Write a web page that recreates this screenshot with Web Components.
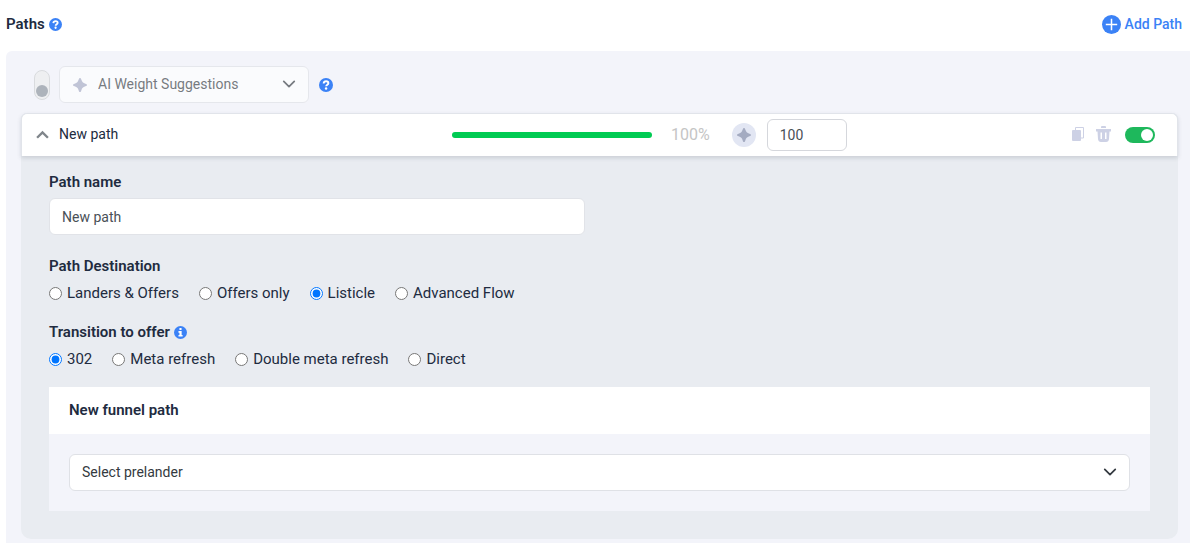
<!DOCTYPE html>
<html lang="en">
<head>
<meta charset="utf-8">
<meta name="viewport" content="width=device-width, initial-scale=1">
<title>Paths</title>
<style>
html, body {
    margin: 0;
    padding: 0;
}
body {
    background: #fff;
    color: #212b40;
    font-family: Roboto, "Liberation Sans", sans-serif;
    font-size: 15px;
    line-height: 22px;
}
</style>
</head>
<body>
<paths-editor></paths-editor>

<script>
const ICONS = {
  help: `<svg viewBox="0 0 16 16"><circle cx="8" cy="8" r="8" fill="currentColor"/><path d="M5.300 6.300C5.500 4.500 6.600 3.800 8.100 3.800c1.600 0 2.600.8 2.600 2.100 0 1.800-2.500 1.700-2.500 3.600" fill="none" stroke="#fff" stroke-width="2.200"/><circle cx="8.100" cy="12" r="1.400" fill="#fff"/></svg>`,
  info: `<svg viewBox="0 0 16 16"><circle cx="8" cy="8" r="8" fill="currentColor"/><path d="M6.7 2.600h2.600v2.400H6.700zM5.500 6.200h3.900v4.800h1.200v2H5.500v-2h1.200V8.200H5.500z" fill="#fff"/></svg>`,
  plus: `<svg viewBox="0 0 20 20"><circle cx="10" cy="10" r="10" fill="currentColor"/><path d="M10 4v12M4 10h12" stroke="#fff" stroke-width="1.6"/></svg>`,
  spark: `<svg viewBox="0 0 16 16"><path d="M8 1c.6 0 1 .6 1.300 1.600.8 2.500 1.600 3.300 4.100 4.100C14.400 7 15 7.400 15 8s-.6 1-1.600 1.300c-2.500.8-3.300 1.600-4.100 4.100C9 14.400 8.600 15 8 15s-1-.6-1.300-1.600c-.8-2.500-1.600-3.300-4.100-4.100C1.600 9 1 8.600 1 8s.6-1 1.600-1.300c2.500-.8 3.300-1.600 4.100-4.100C7 1.600 7.400 1 8 1z" fill="currentColor"/></svg>`,
  down: `<svg viewBox="0 0 16 16"><path d="M2 5l6 6 6-6" fill="none" stroke="currentColor" stroke-width="2" stroke-linecap="round" stroke-linejoin="round"/></svg>`,
  up: `<svg viewBox="0 0 12 12"><path d="M1 9l5-5 5 5" fill="none" stroke="currentColor" stroke-width="2.2"/></svg>`,
  copy: `<svg viewBox="0 0 15 16"><path d="M4.500 4V1.500h8V12H10" fill="none" stroke="currentColor"/><rect x="1" y="4" width="9" height="11" rx="1" fill="currentColor"/></svg>`,
  trash: `<svg viewBox="0 0 15 16"><path d="M5 2V1q0-1 1-1h3q1 0 1 1v1z" fill="currentColor"/><path d="M0 3h15v2.500h-1.500L13 13q-.3 3-3 3H5q-2.700 0-3-3L1.500 5.500H0zM4.500 6.500V13H6V6.500zM9 6.500V13h1.500V6.500z" fill="currentColor" fill-rule="evenodd"/></svg>`,
};

function render(el, html) {
  const template = document.createElement("template");
  template.innerHTML = html;
  el.attachShadow({ mode: "open" }).appendChild(template.content.cloneNode(true));
}

class UiIcon extends HTMLElement {
  constructor() {
    super();
    render(this, `
<style>
:host {
    display: inline-flex;
    flex: none;
    width: 13px;
    height: 13px;
}
svg {
    display: block;
    width: 100%;
    height: 100%;
}
</style>
`);
  }

  connectedCallback() {
    if (this.shadowRoot.querySelector("svg")) return;
    this.shadowRoot.innerHTML += ICONS[this.getAttribute("name")];
  }
}

class ToggleSwitch extends HTMLElement {
  constructor() {
    super();
    render(this, `
<style>
:host {
    display: flex;
    flex: none;
}
input {
    appearance: none;
    box-sizing: border-box;
    display: flex;
    align-items: center;
    justify-content: flex-end;
    width: 30px;
    height: 16px;
    margin: 0;
    padding: 2px;
    border-radius: 8px;
    background: #1eb85c;
    cursor: pointer;
}
input::before {
    content: "";
    width: 12px;
    height: 12px;
    border-radius: 50%;
    background: #fff;
}
input:not(:checked) {
    justify-content: flex-start;
    background: #c9cedb;
}
:host([vertical]) input {
    flex-direction: column;
    justify-content: flex-end;
    width: 16px;
    height: 30px;
    padding: 2px 1px;
    border: 1px solid #d9dbde;
    background: #eeeff1;
}
:host([vertical]) input::before {
    background: #adb3bb;
}
</style>
<input type="checkbox" role="switch">
`);
  }

  connectedCallback() {
    const input = this.shadowRoot.querySelector("input");
    input.checked = this.hasAttribute("checked");
    input.setAttribute("aria-label", this.getAttribute("label"));
  }
}

class SelectBox extends HTMLElement {
  constructor() {
    super();
    render(this, `
<style>
:host {
    display: block;
    position: relative;
    color: #343a40;
}
:host([disabled]) {
    opacity: 0.65;
}
select {
    appearance: none;
    box-sizing: border-box;
    display: block;
    width: 100%;
    height: 37px;
    margin: 0;
    padding: 0 36px 2px 12px;
    border: 1px solid #dfe1e6;
    border-radius: 6px;
    background: #fff;
    color: inherit;
    opacity: 1;
    font: 14px Roboto, "Liberation Sans", sans-serif;
}
:host([icon]) select {
    padding-left: 38px;
}
.mark, .arrow {
    position: absolute;
    inset: 0 auto 0 13px;
    display: flex;
    align-items: center;
    pointer-events: none;
}
.arrow {
    inset: 0 13px 2px auto;
}
.arrow ui-icon {
    width: 14px;
    height: 14px;
}
</style>
<select><option></option></select>
<span class="mark"><slot name="icon"></slot></span>
<span class="arrow"><ui-icon name="down"></ui-icon></span>
`);
  }

  connectedCallback() {
    const select = this.shadowRoot.querySelector("select");
    select.setAttribute("aria-label", this.getAttribute("label"));
    select.disabled = this.hasAttribute("disabled");
    select.options[0].textContent = this.getAttribute("value");
  }
}

class TextField extends HTMLElement {
  constructor() {
    super();
    render(this, `
<style>
:host {
    display: grid;
    gap: 5px;
}
label {
    font-weight: 600;
}
input {
    box-sizing: border-box;
    width: 100%;
    height: 37px;
    padding: 0 12px;
    border: 1px solid #e1e3e8;
    border-radius: 6px;
    background: #fff;
    color: #495057;
    font: 14px Roboto, "Liberation Sans", sans-serif;
}
</style>
<label for="field"></label>
<input id="field" type="text">
`);
  }

  connectedCallback() {
    this.shadowRoot.querySelector("label").textContent = this.getAttribute("label");
    this.shadowRoot.querySelector("input").value = this.getAttribute("value");
  }
}

class RadioGroup extends HTMLElement {
  constructor() {
    super();
    render(this, `
<style>
:host {
    display: block;
}
fieldset {
    min-width: 0;
    margin: 0;
    padding: 0;
    border: 0;
}
legend {
    display: flex;
    align-items: center;
    gap: 4px;
    margin-bottom: 5px;
    padding: 0;
    font-weight: 600;
}
.options {
    display: flex;
    flex-wrap: wrap;
    column-gap: 20px;
}
label {
    display: flex;
    align-items: center;
    gap: 5px;
}
input {
    width: 13px;
    height: 13px;
    margin: 0;
}
</style>
<fieldset>
    <legend><span></span><slot></slot></legend>
    <div class="options"></div>
</fieldset>
`);
  }

  connectedCallback() {
    const options = this.shadowRoot.querySelector(".options");
    this.shadowRoot.querySelector("legend span").textContent = this.getAttribute("label");
    options.innerHTML = "";
    this.getAttribute("options").split("|").forEach((text) => {
      const label = document.createElement("label");
      const input = document.createElement("input");
      input.type = "radio";
      input.name = "choice";
      input.checked = text === this.getAttribute("value");
      label.append(input, text);
      options.append(label);
    });
  }
}

class FunnelBox extends HTMLElement {
  constructor() {
    super();
    render(this, `
<style>
:host {
    display: block;
    background: #f3f4fa;
}
h3 {
    margin: 0;
    padding: 12px 20px 13px;
    background: #fff;
    font-size: 15px;
    font-weight: 600;
}
.content {
    padding: 20px;
}
</style>
<h3></h3>
<div class="content"><slot></slot></div>
`);
  }

  connectedCallback() {
    this.shadowRoot.querySelector("h3").textContent = this.getAttribute("heading");
  }
}

class PathCard extends HTMLElement {
  constructor() {
    super();
    render(this, `
<style>
:host {
    display: block;
    border-radius: 6px 6px 10px 10px;
    background: #e9ecf1;
}
header {
    position: relative;
    box-sizing: border-box;
    display: flex;
    align-items: center;
    min-height: 43px;
    padding: 0 22px 0 14px;
    border: 1px solid #e1e4ea;
    border-bottom: 0;
    border-radius: 6px 6px 0 0;
    background: #fff;
    box-shadow: 0 2px 4px rgba(60, 70, 90, 0.18);
}
button {
    display: flex;
    align-items: center;
    margin: 0;
    padding: 0;
    border: 0;
    background: none;
    color: inherit;
    font: 14px/20px Roboto, "Liberation Sans", sans-serif;
    cursor: pointer;
}
.title {
    flex: 0 0 37%;
    gap: 10px;
    padding-bottom: 2px;
}
.title ui-icon {
    color: #80868b;
}
progress {
    appearance: none;
    flex: none;
    width: 200px;
    height: 6px;
    margin-left: 2px;
    border: 0;
    border-radius: 3px;
    overflow: hidden;
    background: #e9ecef;
}
progress::-webkit-progress-bar {
    background: #e9ecef;
}
progress::-webkit-progress-value {
    background: #00cb53;
}
.percent {
    margin: 0 22px 0 19px;
    color: #c5c5c5;
    font-size: 16px;
}
.auto {
    justify-content: center;
    width: 24px;
    height: 24px;
    margin-right: 11px;
    border-radius: 50%;
    background: #e2e6f3;
    color: #a4abc1;
}
.auto ui-icon {
    width: 16px;
    height: 16px;
}
.weight {
    box-sizing: border-box;
    width: 80px;
    height: 32px;
    padding: 0 12px;
    border: 1px solid #d5d7dc;
    border-radius: 6px;
    background: #fff;
    color: #495057;
    font: 14px Roboto, "Liberation Sans", sans-serif;
}
.actions {
    display: flex;
    align-items: center;
    gap: 14px;
    margin-left: auto;
    color: #cdd1e5;
}
.actions button {
    padding-bottom: 2px;
}
.actions button + button {
    margin-left: -4px;
}
.actions ui-icon {
    width: 15px;
    height: 16px;
}
.body {
    padding: 15px 28px 28px;
}
</style>
<header>
    <button class="title" type="button" aria-expanded="true"><ui-icon name="up"></ui-icon><span></span></button>
    <progress max="100" value="100" aria-label="Share"></progress>
    <span class="percent">100%</span>
    <button class="auto" type="button" aria-label="Suggest weight"><ui-icon name="spark"></ui-icon></button>
    <input class="weight" type="text" value="100" aria-label="Weight">
    <div class="actions">
        <button type="button" aria-label="Copy"><ui-icon name="copy"></ui-icon></button>
        <button type="button" aria-label="Delete"><ui-icon name="trash"></ui-icon></button>
        <toggle-switch checked label="Enabled"></toggle-switch>
    </div>
</header>
<div class="body"><slot></slot></div>
`);
  }

  connectedCallback() {
    this.shadowRoot.querySelector(".title span").textContent = this.getAttribute("name");
    this.shadowRoot.querySelector(".title").addEventListener("click", () => {
      this.toggleBody();
    });
  }

  toggleBody() {
    const body = this.shadowRoot.querySelector(".body");
    body.hidden = !body.hidden;
    this.shadowRoot.querySelector(".title").setAttribute("aria-expanded", String(!body.hidden));
  }
}

class PathsEditor extends HTMLElement {
  constructor() {
    super();
    render(this, `
<style>
:host {
    display: flex;
    flex-direction: column;
    min-height: 100vh;
    padding-left: 6px;
    box-sizing: border-box;
}
.top {
    display: flex;
    align-items: center;
    justify-content: space-between;
    padding: 13px 8px 16px 0;
}
h2 {
    display: flex;
    align-items: center;
    gap: 4px;
    margin: 0;
    font-size: 15px;
    font-weight: 600;
}
ui-icon {
    color: #3b82f6;
}
.add {
    display: flex;
    align-items: center;
    gap: 4px;
    margin: 0;
    padding: 0;
    border: 0;
    background: none;
    color: #3b82f6;
    font: 500 14px/22px Roboto, "Liberation Sans", sans-serif;
    cursor: pointer;
}
.add ui-icon {
    width: 19px;
    height: 19px;
}
.panel {
    flex: 1;
    padding: 15px 12px 4px 15px;
    border-radius: 6px 0 0 0;
    background: #f3f4fa;
}
.tools {
    display: flex;
    align-items: center;
    gap: 9px;
    margin-bottom: 10px;
    padding-left: 13px;
}
.tools select-box {
    width: 250px;
    margin-right: 1px;
}
.tools select-box ui-icon {
    width: 16px;
    height: 16px;
    color: #a5abc4;
}
.tools > ui-icon {
    width: 14px;
    height: 14px;
}
text-field {
    width: calc(50% - 15px);
    margin-bottom: 20px;
}
radio-group {
    margin-bottom: 17px;
}
</style>
<div class="top">
    <h2>Paths <ui-icon name="help"></ui-icon></h2>
    <button class="add" type="button"><ui-icon name="plus"></ui-icon>Add Path</button>
</div>
<section class="panel">
    <div class="tools">
        <toggle-switch vertical label="AI weights"></toggle-switch>
        <select-box disabled icon label="AI weights mode" value="AI Weight Suggestions">
            <ui-icon slot="icon" name="spark"></ui-icon>
        </select-box>
        <ui-icon name="help"></ui-icon>
    </div>
    <path-card name="New path">
        <text-field label="Path name" value="New path"></text-field>
        <radio-group label="Path Destination" value="Listicle" options="Landers &amp; Offers|Offers only|Listicle|Advanced Flow"></radio-group>
        <radio-group label="Transition to offer" value="302" options="302|Meta refresh|Double meta refresh|Direct">
            <ui-icon name="info"></ui-icon>
        </radio-group>
        <funnel-box heading="New funnel path">
            <select-box label="Prelander" value="Select prelander"></select-box>
        </funnel-box>
    </path-card>
</section>
`);
  }
}

window.customElements.define("ui-icon", UiIcon);
window.customElements.define("toggle-switch", ToggleSwitch);
window.customElements.define("select-box", SelectBox);
window.customElements.define("text-field", TextField);
window.customElements.define("radio-group", RadioGroup);
window.customElements.define("funnel-box", FunnelBox);
window.customElements.define("path-card", PathCard);
window.customElements.define("paths-editor", PathsEditor);
</script>
</body>
</html>
